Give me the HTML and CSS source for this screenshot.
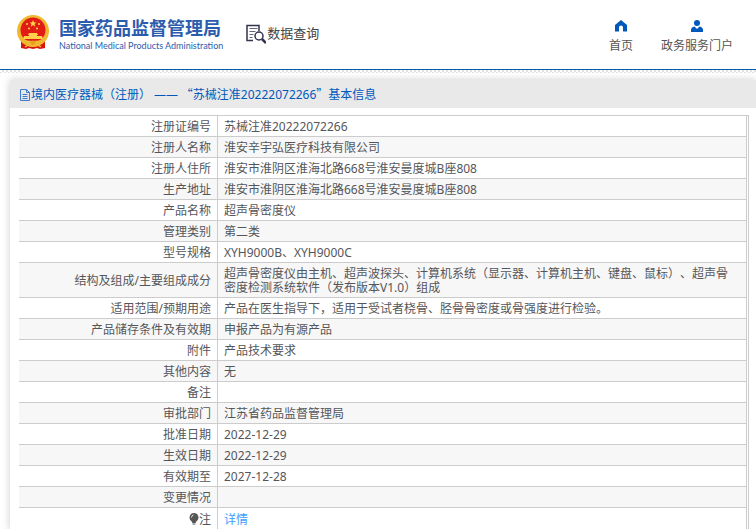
FILE: index.html
```html
<!DOCTYPE html>
<html lang="zh-CN">
<head>
  <meta charset="UTF-8">
  <title>国家药品监督管理局 - 数据查询</title>
  <link rel="stylesheet" href="styles.css">
</head>
<body>

  <header class="header">
    <a class="brand" href="#">
      <svg class="emblem" viewBox="0 0 32 35" aria-hidden="true">
        <path d="M4 22 L4 33 L9 34 L12 33 L16 34 L20 33 L23 34 L28 33 L28 22Z" fill="#d9150f"/>
        <circle cx="16" cy="16" r="16" fill="#f0b932"/>
        <circle cx="16" cy="15" r="12.5" fill="#e21b14"/>
        <path d="M16 5l1 2.500h2.600l-2.100 1.600.8 2.600-2.300-1.600-2.300 1.600.8-2.600-2.100-1.600H15z" fill="#ffd94a"/>
        <g fill="#ffd94a">
          <circle cx="10" cy="9" r="1"/>
          <circle cx="22" cy="9" r="1"/>
          <circle cx="12" cy="13.500" r="1"/>
          <circle cx="20" cy="13.500" r="1"/>
        </g>
        <path d="M12 18h8l1 2h-1v1h5l1 3H6l1-3h5v-1h-1z" fill="#ffd04a"/>
        <path d="M5 24 Q16 28 27 24 L26 28 Q21 26 19 29 L16 31 L13 29 Q11 26 6 28Z" fill="#f0b932"/>
        <circle cx="16" cy="28" r="2.500" fill="#e8a020"/>
        <path d="M8 32q5-4 8-1q3-3 8 1" fill="none" stroke="#f0b932" stroke-width="1.500"/>
      </svg>
      <span class="brand-text">
        <span class="brand-cn">国家药品监督管理局</span>
        <span class="brand-en">National Medical Products Administration</span>
      </span>
    </a>

    <a class="search-title" href="#">
      <svg class="search-icon" viewBox="0 0 20 20" aria-hidden="true" fill="none" stroke="#33334d">
        <path d="M7 16.500H1V1.500h12V7" stroke-width="1.500"/>
        <path d="M3.500 4.500h8M3.500 7.500h6M3.500 10.500h4M3.500 13.500h3" stroke="#66667a"/>
        <circle cx="13" cy="12" r="4" stroke-width="1.500"/>
        <path d="M16 15l4 4" stroke-width="2.500"/>
      </svg>
      <span>数据查询</span>
    </a>

    <nav class="nav">
      <a class="nav-link" href="#">
        <svg class="nav-icon" viewBox="0 0 12 12" aria-hidden="true">
          <path d="M6 0L0 5v6.500h4V7.500a2 2 0 0 1 4 0v4h4V5z" fill="#0058bb"/>
        </svg>
        <span>首页</span>
      </a>
      <a class="nav-link" href="#">
        <svg class="nav-icon" viewBox="0 0 12 12" aria-hidden="true">
          <circle cx="6" cy="3" r="3" fill="#0058bb"/>
          <path d="M0 12V10q0-3 3.500-3.500L6 9l2.500-2.500Q12 7 12 10v2z" fill="#0058bb"/>
        </svg>
        <span>政务服务门户</span>
      </a>
    </nav>
  </header>
  <div class="hatch"></div>

  <main class="panel">
    <h1 class="panel-title">
      <svg class="doc-icon" viewBox="0 0 10 12" aria-hidden="true" fill="none" stroke="#3d7cc9">
        <path d="M.5 .5h6l3 3v8h-9zM6.500 .5v3h3M2.500 5.500h5M2.500 7.500h5M2.500 9.500h5"/>
      </svg>
      <span>境内医疗器械（注册） ——<span class="quote"> “</span>苏械注准20222072266<span class="quote">”</span>基本信息</span>
    </h1>

    <div class="table-wrap">
      <table class="info">
        <tbody>
          <tr><th scope="row">注册证编号</th><td>苏械注准20222072266</td></tr>
          <tr><th scope="row">注册人名称</th><td>淮安辛宇弘医疗科技有限公司</td></tr>
          <tr><th scope="row">注册人住所</th><td>淮安市淮阴区淮海北路668号淮安曼度城B座808</td></tr>
          <tr><th scope="row">生产地址</th><td>淮安市淮阴区淮海北路668号淮安曼度城B座808</td></tr>
          <tr><th scope="row">产品名称</th><td>超声骨密度仪</td></tr>
          <tr><th scope="row">管理类别</th><td>第二类</td></tr>
          <tr><th scope="row">型号规格</th><td>XYH9000B、XYH9000C</td></tr>
          <tr><th scope="row">结构及组成/主要组成成分</th><td>超声骨密度仪由主机、超声波探头、计算机系统（显示器、计算机主机、键盘、鼠标）、超声骨密度检测系统软件（发布版本V1.0）组成</td></tr>
          <tr><th scope="row">适用范围/预期用途</th><td>产品在医生指导下，适用于受试者桡骨、胫骨骨密度或骨强度进行检验。</td></tr>
          <tr><th scope="row">产品储存条件及有效期</th><td>申报产品为有源产品</td></tr>
          <tr><th scope="row">附件</th><td>产品技术要求</td></tr>
          <tr><th scope="row">其他内容</th><td>无</td></tr>
          <tr><th scope="row">备注</th><td></td></tr>
          <tr><th scope="row">审批部门</th><td>江苏省药品监督管理局</td></tr>
          <tr><th scope="row">批准日期</th><td>2022-12-29</td></tr>
          <tr><th scope="row">生效日期</th><td>2022-12-29</td></tr>
          <tr><th scope="row">有效期至</th><td>2027-12-28</td></tr>
          <tr><th scope="row">变更情况</th><td></td></tr>
          <tr class="note">
            <th scope="row">
              <svg class="bulb" viewBox="0 0 10 12" aria-hidden="true">
                <path d="M5 0a4.500 4.500 0 0 1 2.500 8.200L6.500 10h-3L2.500 8.200A4.500 4.500 0 0 1 5 0z" fill="#555"/>
                <path d="M3.500 11h3" stroke="#555"/>
                <path d="M2.500 4.500Q2.500 2.500 4.500 2" fill="none" stroke="#ddd"/>
              </svg>注
            </th>
            <td><a href="#">详情</a></td>
          </tr>
        </tbody>
      </table>
    </div>
  </main>

</body>
</html>
```

FILE: styles.css
```css
body {
  margin: 0;
  background: #fff;
  color: #55565a;
  font-family: "Noto Sans", "Noto Sans CJK SC", sans-serif;
  font-size: 12px;
  text-spacing-trim: space-all;
  overflow-x: hidden;
}
a {
  text-decoration: none;
}
svg {
  flex: none;
}
/* === Header === */
.header {
  display: flex;
  align-items: flex-start;
  height: 69px;
  border-bottom: 1px solid #0058a8;
}
.brand {
  display: flex;
  gap: 10px;
  padding: 15px 0 0 17px;
  color: #2c5cad;
}
.emblem {
  width: 32px;
  height: 35px;
}
.brand-text {
  display: flex;
  flex-direction: column;
  padding-top: 2px;
  white-space: nowrap;
}
.brand-cn {
  font-size: 18px;
  font-weight: bold;
  line-height: 22px;
}
.brand-en {
  font-family: Lato, sans-serif;
  font-size: 9px;
  line-height: 14px;
}
.search-title {
  display: flex;
  gap: 1px;
  padding: 24px 0 0 23px;
  color: #444;
  font-size: 13px;
  line-height: 18px;
}
.search-icon {
  width: 20px;
  height: 20px;
}
.nav {
  display: flex;
  gap: 28px;
  margin-left: auto;
  padding: 20px 23px 0 0;
}
.nav-link {
  display: flex;
  flex-direction: column;
  align-items: center;
  gap: 5px;
  color: #555;
  line-height: 18px;
}
.nav-icon {
  width: 12px;
  height: 12px;
}
.hatch {
  height: 3px;
  background: repeating-conic-gradient(#e2e2e2 0 25%, #fff 0 50%) 0 0 / 4px 4px;
}
/* === Panel === */
.panel {
  margin: 7px 0 0 10px;
  box-shadow: 0 0 8px rgba(0, 0, 0, 0.2);
}
.panel-title {
  display: flex;
  align-items: center;
  gap: 1px;
  margin: 0;
  padding: 5px 10px 4px;
  background: #e9e9e9;
  color: #0058bb;
  font-size: 12px;
  font-weight: normal;
  line-height: 18px;
}
.quote {
  font-family: "Noto Sans CJK SC", sans-serif;
}
.doc-icon {
  width: 10px;
  height: 12px;
}
.table-wrap {
  margin: 7px 7px 0 9px;
  padding-right: 1px;
  border-top: 1px solid #ccc;
  border-right: 1px solid #ccc;
}
/* === Info table === */
.info {
  width: 100%;
  border-collapse: separate;
  border-spacing: 0;
  border-right: 1px solid #ccc;
  line-height: 14px;
}
.info tr:nth-child(even) {
  background: #f7f7f7;
}
.info th,
.info td {
  height: 14px;
  padding: 4px 6px 2px;
  border-bottom: 1px solid #ccc;
}
.info td {
  padding-right: 12px;
}
.info th {
  width: 186px;
  border-right: 1px solid #ccc;
  font-weight: normal;
  text-align: right;
}
.info a {
  color: #409eff;
}
.info .note th,
.info .note td {
  height: 16px;
}
.bulb {
  width: 10px;
  height: 12px;
  vertical-align: -1px;
}
```
